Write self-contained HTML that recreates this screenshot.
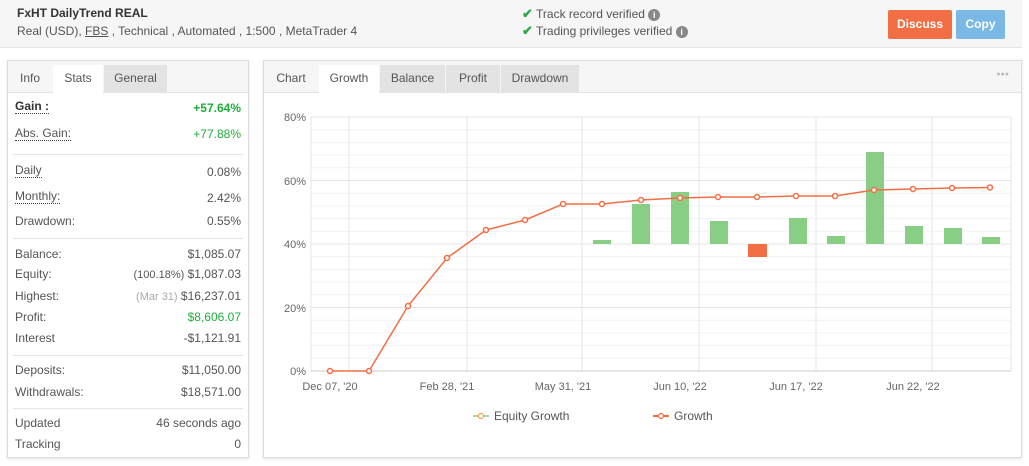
<!DOCTYPE html>
<html><head><meta charset="utf-8"><style>
*{margin:0;padding:0;box-sizing:border-box}
body{width:1029px;height:466px;background:#fff;font-family:"Liberation Sans",Arial,sans-serif;font-size:12px;color:#555;position:relative;overflow:hidden}
.a{position:absolute;white-space:nowrap}
.hdr{position:absolute;left:0;top:0;width:1022px;height:48px;background:#f6f6f6;border-bottom:1px solid #e6e6e6}
.btn{position:absolute;color:#fff;font-weight:bold;font-size:12px;text-align:center;border-radius:2px;line-height:29px;height:29px;top:10px}
.panel{position:absolute;top:60px;height:398px;border:1px solid #ddd;background:#fff;box-shadow:0 1px 3px rgba(0,0,0,.12)}
.tabs{position:absolute;left:0;top:0;right:0;height:32px;background:#f6f6f6;border-bottom:1px solid #e2e2e2}
.tab{position:absolute;top:4px;height:28px;line-height:27px;text-align:center;background:#e3e3e3;color:#555}
.tab.on{background:#fff;height:29px}
.l{left:7px}.r{right:7px;text-align:right}
.hr{position:absolute;left:5px;right:5px;height:1px;background:#e6e6e6}
.u{border-bottom:1px dotted #444}
.g{color:#1fae3a}
.ck{color:#2fa84a;font-weight:bold;font-size:13px}
</style></head><body>
<div class="hdr">
 <div class="a" style="left:17px;top:6px;font-weight:bold;color:#333">FxHT DailyTrend REAL</div>
 <div class="a" style="left:17px;top:24px;color:#555">Real (USD), <span style="text-decoration:underline">FBS</span> , Technical , Automated , 1:500 , MetaTrader 4</div>
 <div class="a" style="left:522px;top:6px;color:#555"><span class="ck">✔</span> Track record verified <span style="display:inline-block;width:12px;height:12px;border-radius:6px;background:#888;color:#fff;font-size:9px;text-align:center;line-height:12px;font-weight:bold">i</span></div>
 <div class="a" style="left:522px;top:23px;color:#555"><span class="ck">✔</span> Trading privileges verified <span style="display:inline-block;width:12px;height:12px;border-radius:6px;background:#888;color:#fff;font-size:9px;text-align:center;line-height:12px;font-weight:bold">i</span></div>
 <div class="btn" style="left:888px;width:64px;background:#f26e45">Discuss</div>
 <div class="btn" style="left:956px;width:49px;background:#7ab9e5">Copy</div>
</div>

<div class="panel" style="left:7px;width:242px">
 <div class="tabs">
  <div class="tab" style="left:0;width:44px;background:transparent">Info</div>
  <div class="tab on" style="left:45px;width:50px">Stats</div>
  <div class="tab" style="left:96px;width:63px">General</div>
 </div>
 <div class="a l" style="top:38px;font-weight:bold;color:#333"><span class="u">Gain :</span></div><div class="a r g" style="top:40px;font-weight:bold">+57.64%</div>
 <div class="a l" style="top:65px"><span class="u">Abs. Gain:</span></div><div class="a r g" style="top:66px">+77.88%</div>
 <div class="hr" style="top:93px"></div>
 <div class="a l" style="top:102px"><span class="u">Daily</span></div><div class="a r" style="top:104px">0.08%</div>
 <div class="a l" style="top:128px"><span class="u">Monthly:</span></div><div class="a r" style="top:130px">2.42%</div>
 <div class="a l" style="top:153px">Drawdown:</div><div class="a r" style="top:153px">0.55%</div>
 <div class="hr" style="top:177px"></div>
 <div class="a l" style="top:186px">Balance:</div><div class="a r" style="top:186px">$1,085.07</div>
 <div class="a l" style="top:206px">Equity:</div><div class="a r" style="top:206px"><span style="font-size:11px">(100.18%)</span> $1,087.03</div>
 <div class="a l" style="top:228px">Highest:</div><div class="a r" style="top:228px"><span style="font-size:11px;color:#aaa">(Mar 31)</span> $16,237.01</div>
 <div class="a l" style="top:249px">Profit:</div><div class="a r g" style="top:249px">$8,606.07</div>
 <div class="a l" style="top:270px">Interest</div><div class="a r" style="top:270px">-$1,121.91</div>
 <div class="hr" style="top:294px"></div>
 <div class="a l" style="top:302px">Deposits:</div><div class="a r" style="top:302px">$11,050.00</div>
 <div class="a l" style="top:324px">Withdrawals:</div><div class="a r" style="top:324px">$18,571.00</div>
 <div class="hr" style="top:347px"></div>
 <div class="a l" style="top:355px">Updated</div><div class="a r" style="top:355px">46 seconds ago</div>
 <div class="a l" style="top:376px">Tracking</div><div class="a r" style="top:376px">0</div>
</div>

<div class="panel" style="left:263px;width:759px">
 <div class="tabs">
  <div class="tab" style="left:0;width:54px;background:transparent">Chart</div>
  <div class="tab on" style="left:55px;width:60px">Growth</div>
  <div class="tab" style="left:116px;width:65px">Balance</div>
  <div class="tab" style="left:182px;width:54px">Profit</div>
  <div class="tab" style="left:237px;width:78px">Drawdown</div>
  <div class="a" style="right:12px;top:10px;color:#bbb;font-size:7px;letter-spacing:0">●●●</div>
 </div>
</div>

<svg class="a" style="left:0;top:0" width="1029" height="466" font-family="Liberation Sans,Arial,sans-serif" font-size="11" fill="#666">
 <g stroke="#f2f2f2" stroke-width="1">
  <line x1="311" x2="1011" y1="129.7" y2="129.7"/><line x1="311" x2="1011" y1="142.4" y2="142.4"/><line x1="311" x2="1011" y1="155.1" y2="155.1"/><line x1="311" x2="1011" y1="167.8" y2="167.8"/>
  <line x1="311" x2="1011" y1="193.2" y2="193.2"/><line x1="311" x2="1011" y1="205.9" y2="205.9"/><line x1="311" x2="1011" y1="218.6" y2="218.6"/><line x1="311" x2="1011" y1="231.3" y2="231.3"/>
  <line x1="311" x2="1011" y1="256.7" y2="256.7"/><line x1="311" x2="1011" y1="269.4" y2="269.4"/><line x1="311" x2="1011" y1="282.1" y2="282.1"/><line x1="311" x2="1011" y1="294.8" y2="294.8"/>
  <line x1="311" x2="1011" y1="320.2" y2="320.2"/><line x1="311" x2="1011" y1="332.9" y2="332.9"/><line x1="311" x2="1011" y1="345.6" y2="345.6"/><line x1="311" x2="1011" y1="358.3" y2="358.3"/>
 </g>
 <g stroke="#e4e4e4" stroke-width="1">
  <line x1="311" x2="1011" y1="117" y2="117"/><line x1="311" x2="1011" y1="180.5" y2="180.5"/><line x1="311" x2="1011" y1="244" y2="244"/><line x1="311" x2="1011" y1="307.5" y2="307.5"/>
  <line x1="349" x2="349" y1="117" y2="371"/><line x1="467" x2="467" y1="117" y2="371"/><line x1="582" x2="582" y1="117" y2="371"/><line x1="699" x2="699" y1="117" y2="371"/><line x1="816" x2="816" y1="117" y2="371"/><line x1="932" x2="932" y1="117" y2="371"/>
  <line x1="311" x2="311" y1="117" y2="371"/><line x1="1011" x2="1011" y1="117" y2="371"/>
 </g>
 <line x1="311" x2="1011" y1="371" y2="371" stroke="#ccc"/>
 <g text-anchor="end"><text x="306" y="121">80%</text><text x="306" y="185">60%</text><text x="306" y="248">40%</text><text x="306" y="312">20%</text><text x="306" y="375">0%</text></g>
 <g text-anchor="middle"><text x="330" y="390">Dec 07, '20</text><text x="447" y="390">Feb 28, '21</text><text x="563" y="390">May 31, '21</text><text x="680" y="390">Jun 10, '22</text><text x="796" y="390">Jun 17, '22</text><text x="913" y="390">Jun 22, '22</text></g>
 <g fill="#88cf85">
  <rect x="593" y="240" width="18" height="4"/><rect x="632" y="204" width="18" height="40"/><rect x="671" y="192" width="18" height="52"/><rect x="710" y="221" width="18" height="23"/><rect x="789" y="218" width="18" height="26"/><rect x="827" y="236" width="18" height="8"/><rect x="866" y="152" width="18" height="92"/><rect x="905" y="226" width="18" height="18"/><rect x="944" y="228" width="18" height="16"/><rect x="982" y="237" width="18" height="7"/>
 </g>
 <rect x="748" y="244" width="19" height="13" fill="#f26e45"/>
 <polyline fill="none" stroke="#f26e45" stroke-width="1.5" points="330,371 369,371 408,306 447,258 486,230 525,220 563,204 602,204 641,200 680,198 718,197 757,197 796,196 835,196 874,190 913,189 952,188 990,187.5"/>
 <g fill="#fff" stroke="#f26e45" stroke-width="1.5">
  <circle cx="330" cy="371" r="2.5"/><circle cx="369" cy="371" r="2.5"/><circle cx="408" cy="306" r="2.5"/><circle cx="447" cy="258" r="2.5"/><circle cx="486" cy="230" r="2.5"/><circle cx="525" cy="220" r="2.5"/><circle cx="563" cy="204" r="2.5"/><circle cx="602" cy="204" r="2.5"/><circle cx="641" cy="200" r="2.5"/><circle cx="680" cy="198" r="2.5"/><circle cx="718" cy="197" r="2.5"/><circle cx="757" cy="197" r="2.5"/><circle cx="796" cy="196" r="2.5"/><circle cx="835" cy="196" r="2.5"/><circle cx="874" cy="190" r="2.5"/><circle cx="913" cy="189" r="2.5"/><circle cx="952" cy="188" r="2.5"/><circle cx="990" cy="187.5" r="2.5"/>
 </g>
 <line x1="473" x2="489" y1="416" y2="416" stroke="#aad7a3" stroke-width="2"/><circle cx="481" cy="416" r="2.5" fill="#fff" stroke="#f2a050" stroke-width="1.2"/>
 <text x="494" y="420" font-size="12" fill="#555">Equity Growth</text>
 <line x1="653" x2="669" y1="416" y2="416" stroke="#f26e45" stroke-width="2"/><circle cx="661" cy="416" r="2.5" fill="#fff" stroke="#f26e45" stroke-width="1.2"/>
 <text x="674" y="420" font-size="12" fill="#555">Growth</text>
</svg>
</body></html>
